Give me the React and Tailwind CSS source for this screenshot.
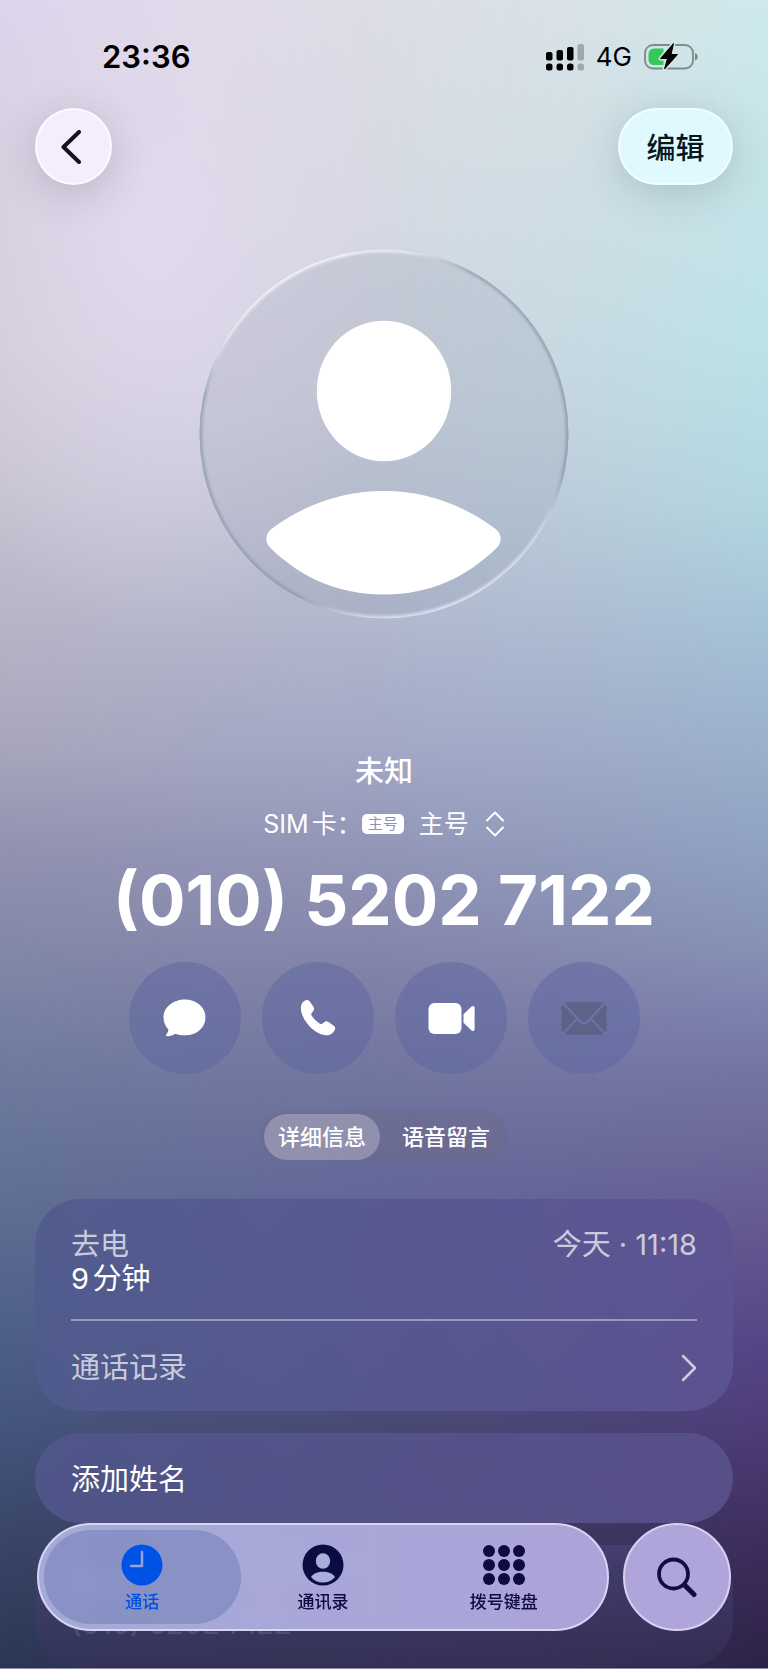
/**
 * App.jsx – Contact detail screen of the phone app.
 *
 * Sections:
 *  1. Backdrop    – Lilac / teal / indigo colour wash
 *  2. Status bar  – Clock, signal, network type, battery
 *  3. Nav         – Back and edit buttons
 *  4. Profile     – Avatar, SIM picker, number, quick actions
 *  5. Details     – Call info and name cards
 *  6. Tab bar     – Calls, contacts, keypad + search
 */

import { useState } from 'react'

// ── Icons ────────────────────────────────────────────────────────────────
const MessageIcon = () => (
    <svg viewBox="0 0 44 38" className="w-[44px] h-[38px]" fill="currentColor" aria-hidden="true">
        <path d="M22 .5C33.7.5 42.5 8.3 42.5 18.4S33.7 36.3 22 36.3c-3.5 0-6.7-.5-9.7-1.6-2.3 1.6-5.6 2.6-8.7 2.4-.8-.1-1-.8-.5-1.4 1.4-1.6 2.1-3.3 2.3-5.3C2.3 27.3.5 23.1.5 18.4.5 8.3 10.3.5 22 .5Z" />
    </svg>
)

const PhoneIcon = () => (
    <svg viewBox="0 0 36 38" className="w-[36px] h-[38px]" fill="currentColor" aria-hidden="true">
        <path d="M4.6 1.8C6.8.4 8.6.9 10 2.8l3.2 4.7c1.3 2 1.1 3.5-.3 5.1l-1.1 1.3c-.7.8-.8 1.5-.2 2.5 1.9 3.2 5 6.3 8.3 8.3 1 .6 1.8.5 2.6-.2l1.4-1.1c1.6-1.3 3.1-1.4 5-.1l4.6 3.2c1.8 1.3 2.2 3 1 5-1.9 3.2-4.9 5.1-8.8 4.7C18.6 35.6 11.6 30.4 7 24.2 3.3 19.3.6 13.7.9 8.5 1.1 5.5 2.3 3.2 4.6 1.8Z" />
    </svg>
)

const VideoIcon = () => (
    <svg viewBox="0 0 48 33" className="w-[48px] h-[33px]" fill="currentColor" aria-hidden="true">
        <rect x="1.5" y="1" width="33" height="31" rx="6" />
        <path d="M36.5 12.2 44.6 4.6C46.1 3.3 47.6 4 47.6 5.9v21.2c0 1.9-1.5 2.6-3 1.3L36.5 20.8Z" />
    </svg>
)

const MailIcon = () => (
    <svg viewBox="0 0 46 33" className="w-[46px] h-[33px]" fill="currentColor" aria-hidden="true">
        <path d="M3.4.8C4 .4 4.8.2 5.6.2h34.8c.8 0 1.6.2 2.2.6L25.8 18.6c-1.8 1.9-3.8 1.9-5.6 0Z" />
        <path d="M1.8 2.6 14.8 16.5 1.8 30.2C.9 29.3.6 28 .6 26.7V6.1c0-1.3.3-2.6 1.2-3.5Z" />
        <path d="M44.2 2.6 31.2 16.5l13 13.7c.9-.9 1.2-2.2 1.2-3.5V6.1c0-1.3-.3-2.6-1.2-3.5Z" />
        <path d="M3.4 32 16.2 18.2l2.2 2.3c2.9 3 6.3 3 9.2 0l2.2-2.3L42.6 32c-.6.5-1.4.7-2.2.7H5.6c-.8 0-1.6-.2-2.2-.7Z" />
    </svg>
)

const ClockIcon = () => (
    <svg viewBox="0 0 42 42" className="size-[42px]" aria-hidden="true">
        <circle cx="21" cy="21" r="20.5" fill="#0051e5" />
        <path d="M21 8v14H10" fill="none" stroke="#93a3dd" strokeWidth="2.5" strokeLinecap="round" strokeLinejoin="round" />
    </svg>
)

const ContactIcon = () => (
    <svg viewBox="0 0 42 42" className="size-[42px]" aria-hidden="true">
        <circle cx="21" cy="21" r="20.5" fill="#0b0c42" />
        <ellipse cx="21" cy="17" rx="7.2" ry="7.8" fill="#a9aedb" />
        <path d="M9 33c2.2-3.4 6.8-5.2 12-5.2s9.8 1.8 12 5.2c-3 3.6-7.3 5.6-12 5.6s-9-2-12-5.6Z" fill="#a9aedb" />
    </svg>
)

const KeypadIcon = () => (
    <svg viewBox="0 0 42 42" className="size-[42px]" fill="#0f0b42" aria-hidden="true">
        {[7, 21, 35].map((y) =>
            [6, 21, 36].map((x) => <circle key={`${x}-${y}`} cx={x} cy={y} r="6" />)
        )}
    </svg>
)

const SearchIcon = () => (
    <svg viewBox="0 0 42 42" className="size-[42px]" fill="none" stroke="#120c46" aria-hidden="true">
        <circle cx="17.5" cy="18" r="14.5" strokeWidth="3.8" />
        <path d="M28.5 29 38 38.5" strokeWidth="5" strokeLinecap="round" />
    </svg>
)

const SignalIcon = () => (
    <svg viewBox="0 0 38 27" className="w-[38px] h-[27px]" aria-hidden="true">
        <rect x="0" y="8" width="6.5" height="8.5" rx="2" />
        <rect x="10.5" y="6" width="6.5" height="10.5" rx="2" />
        <rect x="21" y="3" width="6.5" height="13.5" rx="2" />
        <rect x="31.5" y="0" width="6.5" height="16.5" rx="2" opacity=".25" />
        <rect x="0" y="19.5" width="6.5" height="7" rx="2.5" />
        <rect x="10.5" y="19.5" width="6.5" height="7" rx="2.5" />
        <rect x="21" y="19.5" width="6.5" height="7" rx="2.5" />
        <rect x="31.5" y="19.5" width="6.5" height="7" rx="2.5" opacity=".25" />
    </svg>
)

const BatteryIcon = () => (
    <svg viewBox="0 0 54 28" className="w-[54px] h-[28px]" aria-hidden="true">
        <mask id="bolt-gap">
            <rect width="54" height="28" fill="#fff" />
            <path d="M29.5.5 16.5 15.5h7L20.5 26 33.5 11.5H27Z" fill="#000" stroke="#000" strokeWidth="4" strokeLinejoin="round" />
        </mask>
        <g mask="url(#bolt-gap)">
            <rect x="1" y="2" width="48" height="23.5" rx="8" fill="none" stroke="#7d8b90" strokeWidth="1.8" />
            <path d="M10 5.5h9.5v16.5H10A5.5 5.5 0 0 1 4.5 16.5V11A5.5 5.5 0 0 1 10 5.5Z" fill="#35c759" />
        </g>
        <path d="M51 10c1.8.5 2.8 2 2.8 3.8S52.8 17 51 17.500Z" fill="#7d8b90" />
        <path d="M29.5.5 16.5 15.5h7L20.5 26 33.5 11.5H27Z" fill="#000" stroke="#000" strokeWidth="1" strokeLinejoin="round" />
    </svg>
)

const Avatar = () => (
    <svg viewBox="0 0 370 370" className="size-[370px]" role="img" aria-label="头像">
        <defs>
            <linearGradient id="rim" x1=".29" y1=".05" x2=".71" y2=".95">
                <stop offset="0" stopColor="#f4f5fa" />
                <stop offset=".08" stopColor="#e6e9f1" />
                <stop offset=".2" stopColor="#9aa3b5" />
                <stop offset=".8" stopColor="#929db2" />
                <stop offset=".92" stopColor="#d4daea" />
                <stop offset="1" stopColor="#dfe4f1" />
            </linearGradient>
            <clipPath id="disc"><circle cx="185" cy="185" r="184.5" /></clipPath>
            <filter id="soft"><feGaussianBlur stdDeviation="1.8" /></filter>
        </defs>
        <circle cx="185" cy="185" r="184.5" fill="#8e94a8" fillOpacity=".2" />
        <g clipPath="url(#disc)">
            <circle cx="185" cy="185" r="184.5" fill="none" stroke="url(#rim)" strokeWidth="5" filter="url(#soft)" />
        </g>
        <ellipse cx="185" cy="142" rx="67.2" ry="70.3" fill="#fff" />
        <path d="M185 242c43 0 79 14 111 37.5 7.5 5.5 7.5 14.5.5 20.5C267 328 232 345.5 185 345.5S102 328 72.5 300c-7-6-7-15 .5-20.5C105 256 142 242 185 242Z" fill="#fff" />
    </svg>
)

const actions = [
    { icon: MessageIcon, label: '信息' },
    { icon: PhoneIcon,   label: '呼叫' },
    { icon: VideoIcon,   label: '视频' },
    { icon: MailIcon,    label: '邮件', disabled: true },
]

const segments = ['详细信息', '语音留言']

const tabs = [
    { icon: ClockIcon,   label: '通话' },
    { icon: ContactIcon, label: '通讯录' },
    { icon: KeypadIcon,  label: '拨号键盘' },
]

// ── Backdrop: three vertical ramps blended from left to right ────────────
const Backdrop = () => (
    <div className="absolute inset-0 -z-10 overflow-hidden" aria-hidden="true">
        <div className="absolute inset-0 bg-[linear-gradient(to_bottom,#dfdee5_0%,#d7dae3_13%,#cad0dc_25%,#b3b9cf_37%,#a3a8c6_45%,#9194b6_52%,#8180a8_59%,#71769f_65%,#63679a_72%,#505280_82%,#3f3f66_90%,#343050_100%)]" />
        <div className="absolute inset-0 bg-[linear-gradient(to_bottom,#dbd2ec_0%,#d2cbd9_10%,#cfc9d6_20%,#c6c2d0_29%,#b9b4c7_37%,#a7a5bb_45%,#9291b0_51%,#8288a8_57%,#6e7b9e_64%,#617094_71%,#4f618b_79%,#45567f_85%,#394668_92%,#2b3754_100%)] mask-[linear-gradient(to_right,#000,rgba(0,0,0,0.4)_25%,transparent_55%)]" />
        <div className="absolute inset-0 bg-[linear-gradient(to_bottom,#cee9eb_0%,#c4e4e7_10%,#bce3e8_20%,#b2d7e0_30%,#a4c1d6_38%,#9ab0cb_45%,#8d9fc0_52%,#8591b5_57%,#7e84b0_60%,#7475a5_64%,#6c6799_69%,#64578f_74%,#554485_81%,#4d3b76_86%,#3c2c5c_93%,#2e2246_100%)] mask-[linear-gradient(to_left,#000,rgba(0,0,0,0.4)_25%,transparent_55%)]" />
        <div className="absolute inset-0 bg-[radial-gradient(ellipse_34%_24%_at_20%_14%,rgba(230,220,242,0.8),transparent)]" />
    </div>
)

export default function App() {
    const [segment, setSegment] = useState(0)
    const [tab, setTab] = useState(0)

    return (
        <div className="relative isolate min-h-screen border-b border-[#8d8ca3] pb-px font-[Inter,'Noto_Sans_CJK_SC',sans-serif] text-white [text-autospace:normal]">
            <Backdrop />

            {/* ── Status bar ─────────────────────────────────────────────── */}
            <div className="flex h-[108px] items-center justify-between pt-1.5 pr-[70px] pl-[102px] text-black">
                <time className="text-[31px] leading-10 font-semibold">23:36</time>
                <div className="flex items-center gap-3">
                    <SignalIcon />
                    <span className="text-[26px] leading-10">4G</span>
                    <BatteryIcon />
                </div>
            </div>

            <main className="px-[35px]">
                {/* ── Nav ────────────────────────────────────────────────── */}
                <div className="flex justify-between">
                    <button type="button" aria-label="返回" className="flex size-[77px] items-center justify-center rounded-full border-2 border-white/70 bg-[#f5edfe] shadow-[0_8px_40px_rgba(60,60,80,0.22)]">
                        <svg viewBox="0 0 20 34" className="mr-1.5 h-[34px] w-[20px]" fill="none" stroke="#15101f" strokeWidth="4" strokeLinecap="round" strokeLinejoin="round">
                            <path d="M18 2 2.5 17 18 32" />
                        </svg>
                    </button>
                    <button type="button" className="h-[77px] w-[115px] rounded-full border-2 border-white/60 bg-[#dff9ff] pt-1 text-[29px] font-medium text-[#06181d] shadow-[0_8px_40px_rgba(60,80,90,0.22)]">
                        编辑
                    </button>
                </div>

                {/* ── Profile ────────────────────────────────────────────── */}
                <div className="mt-16 flex flex-col items-center">
                    <Avatar />
                    <p className="mt-[133px] text-[29px] leading-10 font-medium">未知</p>

                    <div className="mt-3 flex items-center text-[25px] leading-10">
                        <label htmlFor="sim">SIM卡：</label>
                        <span className="rounded-[5px] bg-white px-1.5 text-[15px] leading-5 text-[#8f93b5]">主号</span>
                        <select id="sim" className="ml-[15px] appearance-none bg-transparent [field-sizing:content]">
                            <option>主号</option>
                        </select>
                        <svg viewBox="0 0 20 26" className="ml-4 h-[26px] w-[20px]" fill="none" stroke="currentColor" strokeWidth="2" strokeLinecap="round" strokeLinejoin="round" aria-hidden="true">
                            <path d="M2 9.5 10 1.5l8 8M2 16.5l8 8 8-8" />
                        </svg>
                    </div>

                    <h1 className="mt-4 text-[69px] leading-20 font-bold whitespace-nowrap">(010) 5202 7122</h1>

                    <div className="mt-[22px] flex gap-[21px]">
                        {actions.map((a) => (
                            <button
                                key={a.label}
                                type="button"
                                aria-label={a.label}
                                disabled={a.disabled}
                                className="flex size-28 items-center justify-center rounded-full bg-[#5b65a0]/50 disabled:text-[#5d6288]"
                            >
                                <a.icon />
                            </button>
                        ))}
                    </div>

                    <div className="mt-9 flex gap-2 rounded-full bg-[#6d6a87]/40 p-1" role="tablist">
                        {segments.map((s, i) => (
                            <button
                                key={s}
                                type="button"
                                role="tab"
                                aria-selected={segment === i}
                                onClick={() => setSegment(i)}
                                className="h-[46px] rounded-full px-3.5 text-[22px] font-medium aria-selected:bg-white/25"
                            >
                                {s}
                            </button>
                        ))}
                    </div>
                </div>

                {/* ── Details ────────────────────────────────────────────── */}
                <div className="mt-[35px] flex flex-col gap-[22px] text-[29px]">
                    <section className="rounded-[45px] bg-linear-to-r from-[#505b8d]/90 to-[#5c5492]/90 px-9 text-white/70">
                        <div className="border-b-2 border-white/40 pt-[29px] pb-[23px] leading-[34px]">
                            <div className="flex justify-between">
                                <span>去电</span>
                                <span>今天 · 11:18</span>
                            </div>
                            <p className="text-white">9分钟</p>
                        </div>
                        <button type="button" className="flex h-[90px] w-full items-center justify-between pt-1">
                            通话记录
                            <svg viewBox="0 0 16 28" className="h-[28px] w-[16px]" fill="none" stroke="currentColor" strokeWidth="2.5" strokeLinecap="round" strokeLinejoin="round" aria-hidden="true">
                                <path d="m2 2 12 12L2 26" />
                            </svg>
                        </button>
                    </section>

                    <button type="button" className="h-[90px] rounded-[45px] bg-linear-to-r from-[#50568a]/90 to-[#5a518b]/90 px-9 pt-1 text-left">
                        添加姓名
                    </button>

                    {/* Mostly under the tab bar; only its edges and the number show */}
                    <section className="h-[122px] rounded-[45px] bg-linear-to-b from-[#48457a]/60 to-[#37325a]/60 px-9 pt-[26px] leading-[34px]">
                        <div className="flex gap-3 blur-[5px]">
                            <div className="size-6 rounded-full bg-white" />
                            <div className="size-6 rounded-full bg-white/60" />
                        </div>
                        <p className="mt-3 text-white/15">(010) 5202 7122</p>
                    </section>
                </div>
            </main>

            {/* ── Tab bar ────────────────────────────────────────────────── */}
            <div className="fixed inset-x-0 bottom-[38px] flex gap-3.5 px-[37px] text-[17px] font-medium text-[#0f0b42]">
                <nav className="flex h-[108px] flex-1 rounded-full border-2 border-[#d6d6f4] bg-linear-to-r from-[#acb3e0]/93 to-[#b3a9df]/95 p-[5px] backdrop-blur-sm">
                    {tabs.map((t, i) => (
                        <button
                            key={t.label}
                            type="button"
                            aria-current={tab === i ? 'page' : undefined}
                            onClick={() => setTab(i)}
                            className="-ml-4 flex flex-1 flex-col items-center justify-center gap-1 rounded-full pt-1 first:ml-0 aria-[current=page]:bg-[#6b7ab3]/50 aria-[current=page]:text-[#0051e5]"
                        >
                            <t.icon />
                            <span className="leading-6">{t.label}</span>
                        </button>
                    ))}
                </nav>
                <button type="button" aria-label="搜索" className="flex size-[108px] items-center justify-center rounded-full border-2 border-[#d9d0f2] bg-[#b0a5db]">
                    <SearchIcon />
                </button>
            </div>
        </div>
    )
}
